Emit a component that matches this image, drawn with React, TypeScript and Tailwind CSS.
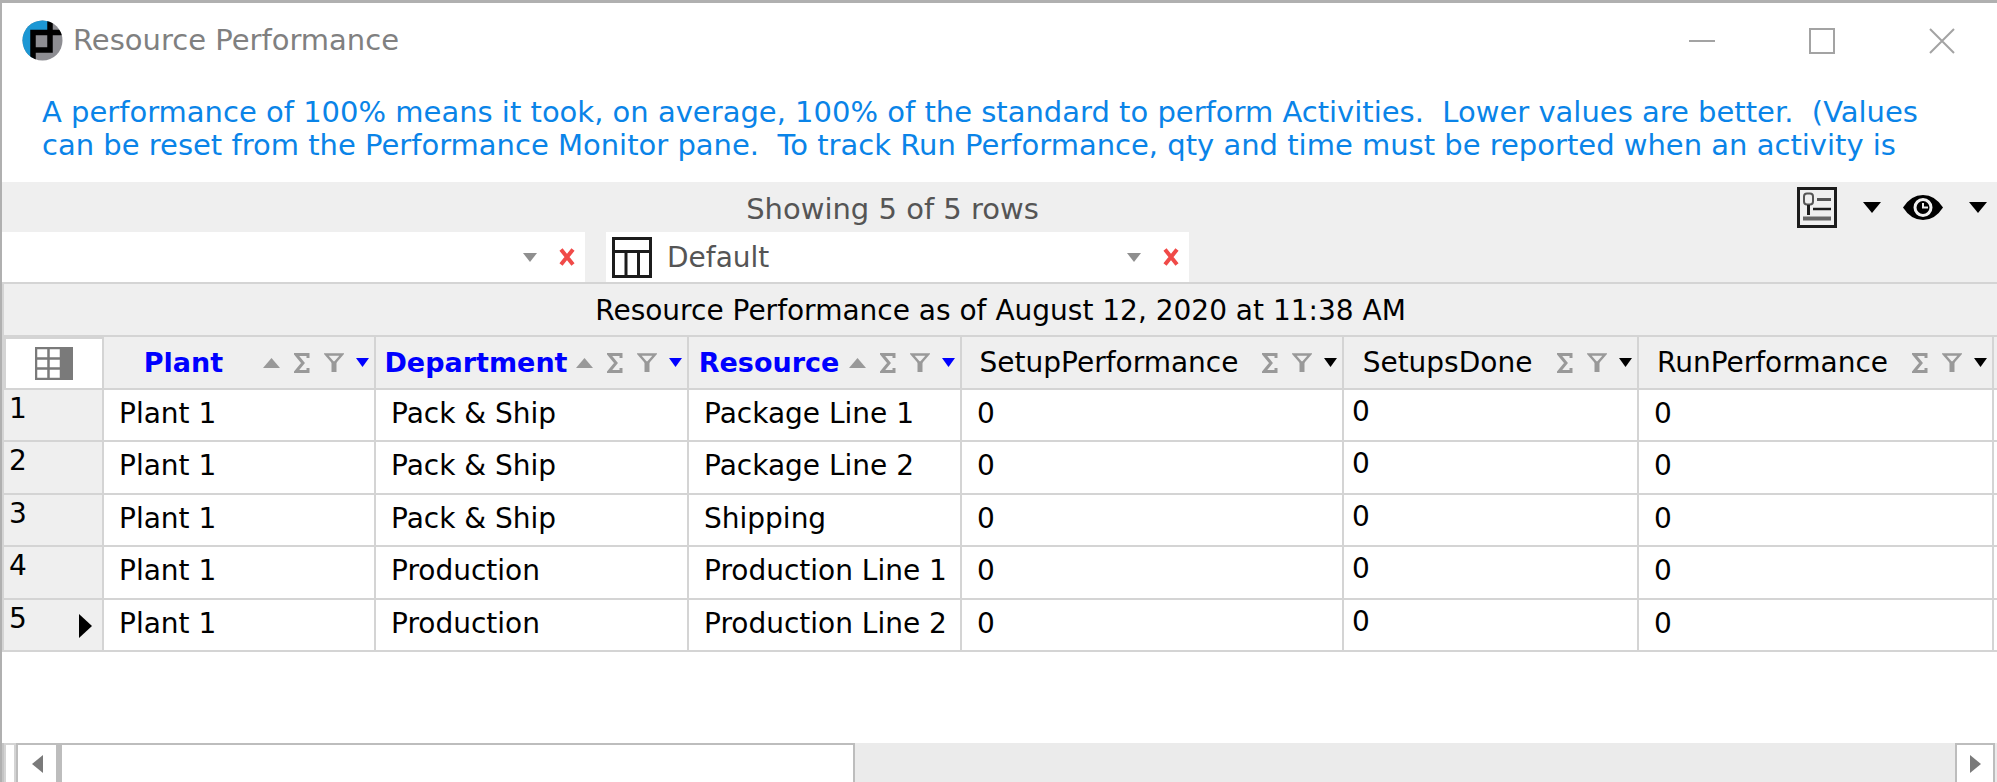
import type { ReactNode } from "react";

type Column = {
  name: string;
  key: boolean;
  width: string;
  cell: string;
};

const columns: Column[] = [
  { name: "Plant", key: true, width: "w-[272px]", cell: "pt-[7px] pl-[15px]" },
  { name: "Department", key: true, width: "w-[313px]", cell: "pt-[7px] pl-[15px]" },
  { name: "Resource", key: true, width: "w-[273px]", cell: "pt-[7px] pl-[15px]" },
  { name: "SetupPerformance", key: false, width: "w-[382px]", cell: "pt-[7px] pl-[15px]" },
  { name: "SetupsDone", key: false, width: "w-[295px]", cell: "pt-[5px] pl-2" },
  { name: "RunPerformance", key: false, width: "w-[355px]", cell: "pt-[7px] pl-[15px]" },
];

const rows = [
  ["Plant 1", "Pack & Ship", "Package Line 1", "0", "0", "0"],
  ["Plant 1", "Pack & Ship", "Package Line 2", "0", "0", "0"],
  ["Plant 1", "Pack & Ship", "Shipping", "0", "0", "0"],
  ["Plant 1", "Production", "Production Line 1", "0", "0", "0"],
  ["Plant 1", "Production", "Production Line 2", "0", "0", "0"],
];

const Logo = () => (
  <svg width="41" height="41" viewBox="0 0 41 41">
    <clipPath id="logo-circle">
      <circle cx="20.5" cy="20.5" r="20" />
    </clipPath>
    <g clipPath="url(#logo-circle)">
      <rect width="41" height="41" fill="#8d8d92" />
      <path d="M0 0H28V12H11V41H0Z" fill="#1c97d4" />
      <path d="M11 41V12.500H41M28 0V30H11" fill="none" stroke="#000" strokeWidth="5.500" />
    </g>
  </svg>
);

const DownArrow = ({ className, width, height }: { className: string; width: number; height: number }) => (
  <svg className={className} width={width} height={height} viewBox="0 0 16 10" preserveAspectRatio="none">
    <path d="M0 0H16L8 10Z" fill="currentColor" />
  </svg>
);

const Combo = ({ label, value, icon }: { label: string; value: string; icon?: ReactNode }) => (
  <div className="flex h-[50px] w-[583px] items-center bg-white pr-2.5 pl-1.5">
    {icon}
    <button aria-label={label} className="flex h-full flex-1 items-center justify-between pr-[22px] pl-[15px]">
      <span>{value}</span>
      <DownArrow className="text-[#8f8f8f]" width={14} height={9} />
    </button>
    <button aria-label={`Clear ${label}`}>
      <svg width="16" height="18" viewBox="0 0 16 18">
        <path d="M2 1.500L14 16.500M14 1.500L2 16.500" stroke="#f04a48" strokeWidth="4" />
      </svg>
    </button>
  </div>
);

const HeaderCell = ({ column }: { column: Column }) => (
  <th className="border-r-2 border-b-2 border-[#d4d4d4] p-0 font-normal">
    <div className="flex h-[51px] items-center pr-[5px]">
      <span className={column.key ? "flex-1 text-center text-[27px] font-bold text-[#0000ff]" : "flex-1 pr-1.5 text-center"}>
        {column.name}
      </span>
      {column.key && (
        <svg className="mr-3.5 text-[#999]" width="17" height="10" viewBox="0 0 17 10">
          <path d="M0 10H17L8.500 0Z" fill="currentColor" />
        </svg>
      )}
      <button aria-label="Summary" className="mr-3.5 text-[#999]">
        <svg width="16" height="20" viewBox="0 0 16 20">
          <path d="M14 5V1.500H2L9 10L2 18.500H14V15" fill="none" stroke="currentColor" strokeWidth="3" />
        </svg>
      </button>
      <button aria-label="Filter" className="mr-3 text-[#999]">
        <svg width="20" height="19" viewBox="0 0 20 19">
          <path d="M2 1.500H18L11 9.500H9Z" fill="none" stroke="currentColor" strokeWidth="2.500" />
          <rect x="7.500" y="9" width="5" height="10" fill="currentColor" />
        </svg>
      </button>
      <button aria-label={`${column.name} menu`}>
        <DownArrow className={column.key ? "text-[#0000ff]" : "text-black"} width={13} height={9} />
      </button>
    </div>
  </th>
);

const App = () => {
  return (
    <div className="flex min-h-screen flex-col border-t-[3px] border-l-2 border-[#b0b0b0] bg-white font-['DejaVu_Sans',sans-serif] text-[28px] leading-[33px] text-black">
      <header className="flex h-[75px] items-center pl-5">
        <Logo />
        <h1 className="ml-2.5 flex-1 text-[29px] text-[#808080]">Resource Performance</h1>
        <div className="flex gap-2.5 text-[#a3a3a3]">
          {[
            { label: "Minimize", d: "M0 13H26" },
            { label: "Maximize", d: "M1 1H25V25H1Z" },
            { label: "Close", d: "M1 1L25 25M25 1L1 25" },
          ].map((control) => (
            <button key={control.label} aria-label={control.label} className="flex w-[110px] justify-center">
              <svg width="26" height="26" viewBox="0 0 26 26">
                <path d={control.d} fill="none" stroke="currentColor" strokeWidth="2" />
              </svg>
            </button>
          ))}
        </div>
      </header>

      <p className="px-10 pt-[18px] pb-5 text-[29px] text-[#0a84e8]">
        A performance of 100% means it took, on average, 100% of the standard to perform Activities.&nbsp; Lower values are better.&nbsp; (Values
        <br />
        can be reset from the Performance Monitor pane.&nbsp; To track Run Performance, qty and time must be reported when an activity is
      </p>

      <div className="bg-[#efefef] text-[#555]">
        <div className="flex h-[50px] items-center pr-2.5">
          <p className="flex-1 pt-1 pr-3.5 text-center text-[29px]">Showing 5 of 5 rows</p>
          <div className="flex items-center text-black">
            <button aria-label="Properties">
              <svg width="40" height="41" viewBox="0 0 40 41" fill="none" stroke="#1c1c1c">
                <rect x="1.500" y="1.500" width="37" height="38" strokeWidth="3" />
                <rect x="7" y="6.500" width="9" height="11" rx="3" stroke="#555" strokeWidth="2" />
                <path d="M11.500 18V28" strokeWidth="3" />
                <path d="M20 12.500H34" stroke="#555" strokeWidth="3" />
                <path d="M16 22H34" strokeWidth="2.500" />
                <path d="M6 31.500H34" stroke="#666" strokeWidth="4" />
              </svg>
            </button>
            <button aria-label="Properties menu" className="ml-[26px]">
              <DownArrow className="" width={18} height={11} />
            </button>
            <button aria-label="Visibility" className="ml-[22px]">
              <svg width="40" height="25" viewBox="0 0 40 25">
                <path d="M0 12.500Q8 0 20 0T40 12.500Q32 25 20 25T0 12.500Z" fill="#000" />
                <circle cx="20" cy="12.500" r="8" fill="none" stroke="#efefef" strokeWidth="3" />
                <path d="M20 8V12.500H25" fill="none" stroke="#efefef" strokeWidth="2" />
              </svg>
            </button>
            <button aria-label="Visibility menu" className="ml-[26px]">
              <DownArrow className="" width={18} height={11} />
            </button>
          </div>
        </div>
        <div className="flex gap-[21px]">
          <Combo label="Filter" value="" />
          <Combo
            label="Layout"
            value="Default"
            icon={
              <svg width="40" height="41" viewBox="0 0 40 41" fill="none" stroke="#1c1c1c" strokeWidth="3">
                <path d="M1.500 1.500H38.500V39.500H1.500ZM1.500 14.500H38.500M14 14.500V39.500M26.500 14.500V39.500" />
              </svg>
            }
          />
        </div>
      </div>

      <table className="w-full table-fixed border-separate border-spacing-0 border-t-2 border-l-2 border-[#d4d4d4]">
        <colgroup>
          <col className="w-[100px]" />
          {columns.map((column) => (
            <col key={column.name} className={column.width} />
          ))}
          <col />
        </colgroup>
        <thead className="bg-[#efefef]">
          <tr>
            <th colSpan={8} className="h-[53px] border-b-2 border-[#d4d4d4] p-0 pt-0.5 font-normal">
              Resource Performance as of August 12, 2020 at 11:38 AM
            </th>
          </tr>
          <tr>
            <th className="border-2 border-[#d4d4d4] bg-white p-0">
              <button aria-label="Choose fields" className="flex w-full justify-center">
                <svg width="38" height="33" viewBox="0 0 38 33">
                  <path d="M1 1H26V32H1ZM1 11.500H26M1 21.500H26M13.500 1V32" fill="none" stroke="#7a7a7a" strokeWidth="2.500" />
                  <rect x="26" width="12" height="33" fill="#7a7a7a" />
                </svg>
              </button>
            </th>
            {columns.map((column) => (
              <HeaderCell key={column.name} column={column} />
            ))}
            <th className="border-b-2 border-[#d4d4d4] p-0"></th>
          </tr>
        </thead>
        <tbody>
          {rows.map((row, index) => (
            <tr key={index} className="h-[52px] even:h-[53px]">
              <th className="border-r-2 border-b-2 border-[#d4d4d4] bg-[#efefef] p-0 text-left align-top font-normal">
                <div className="flex items-start justify-between pt-0.5 pr-2.5 pl-[5px]">
                  {index + 1}
                  {index === 4 && (
                    <svg className="mt-3" width="13" height="24" viewBox="0 0 13 24">
                      <path d="M0 0L13 12L0 24Z" />
                    </svg>
                  )}
                </div>
              </th>
              {row.map((value, i) => (
                <td key={columns[i].name} className={`${columns[i].cell} border-r-2 border-b-2 border-[#d4d4d4] align-top whitespace-nowrap`}>
                  {value}
                </td>
              ))}
              <td className="border-b-2 border-[#d4d4d4] p-0"></td>
            </tr>
          ))}
        </tbody>
      </table>

      <div className="mt-auto flex h-[39px] border-l-2 border-[#c4c4c4] bg-[#ebebeb]">
        <div className="w-3 border-2 border-b-0 border-[#d4d4d4] bg-white"></div>
        <button aria-label="Scroll left" className="flex w-[42px] items-center justify-center border-2 border-b-0 border-[#bdbdbd] bg-white">
          <svg width="11" height="18" viewBox="0 0 11 18">
            <path d="M11 0V18L0 9Z" fill="#7a7a7a" />
          </svg>
        </button>
        <div className="flex-1">
          <div className="h-full w-[42%] border-2 border-b-0 border-l-4 border-[#bdbdbd] bg-white"></div>
        </div>
        <button aria-label="Scroll right" className="mr-0.5 flex w-10 items-center justify-center border-2 border-b-0 border-[#bdbdbd] bg-white">
          <svg width="11" height="18" viewBox="0 0 11 18">
            <path d="M0 0V18L11 9Z" fill="#7a7a7a" />
          </svg>
        </button>
      </div>
    </div>
  );
};

export default App;
